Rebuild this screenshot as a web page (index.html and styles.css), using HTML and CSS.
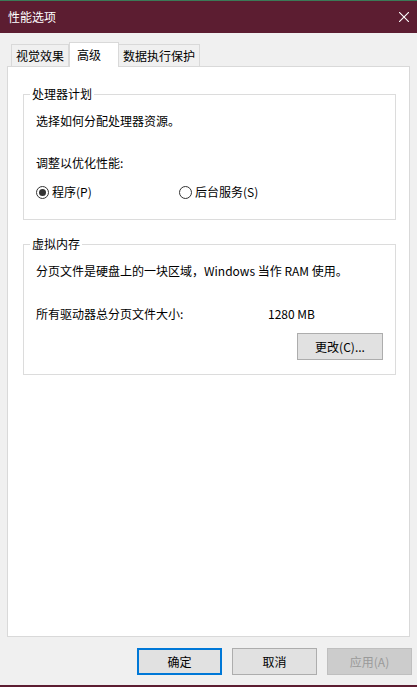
FILE: index.html
```html
<!DOCTYPE html>
<html lang="zh-CN">
<head>
    <meta charset="UTF-8">
    <meta name="viewport" content="width=device-width, initial-scale=1.0">
    <title>性能选项</title>
    <link rel="stylesheet" href="styles.css">
</head>
<body>

    <div class="dialog">
        <div class="titlebar">
            <span class="title">性能选项</span>
            <button class="close" title="关闭">
                <svg width="10" height="10" viewBox="0 0 10 10">
                    <path d="M0 0 L10 10 M10 0 L0 10" stroke="#fff" stroke-width="1.1" fill="none"/>
                </svg>
            </button>
        </div>

        <div class="body">
            <div class="tabs">
                <div class="tab">视觉效果</div>
                <div class="tab active">高级</div>
                <div class="tab">数据执行保护</div>
            </div>

            <div class="panel">
                <!-- Processor scheduling -->
                <fieldset class="group">
                    <legend>处理器计划</legend>
                    <p class="line">选择如何分配处理器资源。</p>
                    <p class="line spaced">调整以优化性能:</p>
                    <div class="radios">
                        <label class="radio"><span class="dot checked"></span>程序(P)</label>
                        <label class="radio"><span class="dot"></span>后台服务(S)</label>
                    </div>
                </fieldset>

                <!-- Virtual memory -->
                <fieldset class="group memory">
                    <legend>虚拟内存</legend>
                    <p class="line">分页文件是硬盘上的一块区域，Windows 当作 RAM 使用。</p>
                    <div class="size-row">
                        <span>所有驱动器总分页文件大小:</span>
                        <span>1280 MB</span>
                    </div>
                    <div class="change-row">
                        <button class="btn">更改(C)...</button>
                    </div>
                </fieldset>
            </div>

            <div class="actions">
                <button class="btn default">确定</button>
                <button class="btn">取消</button>
                <button class="btn" disabled>应用(A)</button>
            </div>
        </div>
    </div>

</body>
</html>
```

FILE: styles.css
```css
/* Reset styles */
* {
    margin: 0;
    padding: 0;
    box-sizing: border-box;
}

body {
    font-family: "Noto Sans CJK SC", "Noto Sans", sans-serif;
    font-size: 12px;
    line-height: 16px;
    color: #000;
    background-color: #f0f0f0;
}

/* Window frame */
.dialog {
    width: 417px;
    height: 687px;
    display: flex;
    flex-direction: column;
    background-color: #f0f0f0;
    border-bottom: 2px solid #5c1d31;
}

.titlebar {
    height: 33px;
    border-top: 1px solid #3b7a57;
    background-color: #5c1d31;
    display: flex;
    align-items: center;
    justify-content: space-between;
    padding: 0 8px;
    color: #fff;
}

.close {
    background: none;
    border: none;
    width: 10px;
    height: 10px;
    display: flex;
}

.body {
    flex: 1;
    display: flex;
    flex-direction: column;
    padding-top: 9px;
}

/* Tabs */
.tabs {
    display: flex;
    align-items: flex-end;
    margin-left: 11px;
    height: 24px;
    position: relative;
    z-index: 1;
}

.tab {
    height: 22px;
    padding: 3px 4px 0 4px;
    border: 1px solid #d9d9d9;
    border-bottom: none;
    background-color: #f0f0f0;
}

.tab + .tab {
    border-left: none;
}

.tab.active {
    height: 25px;
    width: 50px;
    margin-bottom: -1px;
    padding: 4px 0 0 7px;
    background-color: #fff;
    border-left: 1px solid #d9d9d9;
}

.tab.active + .tab {
    border-left: none;
}

/* Tab page */
.panel {
    flex: 1;
    margin: 0 7px;
    background-color: #fff;
    border: 1px solid #d9d9d9;
    padding: 0 13px 0 15px;
}

.group {
    border: 1px solid #dcdcdc;
    padding: 11px 12px 19px 12px;
    margin-top: 19px;
    min-width: 0;
}

.group legend {
    margin-left: -6px;
    padding: 0 2px;
    line-height: 16px;
}

.group.memory {
    margin-top: 16px;
    padding-bottom: 14px;
}

.line.spaced {
    margin-top: 26px;
}

.radios {
    display: flex;
    margin-top: 13px;
}

.radio {
    display: flex;
    align-items: center;
    gap: 3px;
    width: 143px;
}

.dot {
    width: 13px;
    height: 13px;
    border: 1px solid #333;
    border-radius: 50%;
    background-color: #fff;
    display: flex;
    align-items: center;
    justify-content: center;
}

.dot.checked::after {
    content: "";
    width: 7px;
    height: 7px;
    border-radius: 50%;
    background-color: #333;
}

.size-row {
    display: grid;
    grid-template-columns: 232px auto;
    margin-top: 27px;
}

.change-row {
    display: flex;
    justify-content: flex-end;
    margin-top: 11px;
}

/* Buttons */
.btn {
    font-family: inherit;
    font-size: 12px;
    color: #000;
    height: 27px;
    width: 86px;
    background-color: #e1e1e1;
    border: 1px solid #adadad;
}

.btn.default {
    border: 2px solid #0078d7;
}

.btn:disabled {
    background-color: #cccccc;
    border-color: #bfbfbf;
    color: #9a9a9a;
}

.actions {
    display: flex;
    justify-content: flex-end;
    gap: 10px;
    padding: 11px 5px 10px 0;
}

.actions .btn {
    width: 85px;
}
```
